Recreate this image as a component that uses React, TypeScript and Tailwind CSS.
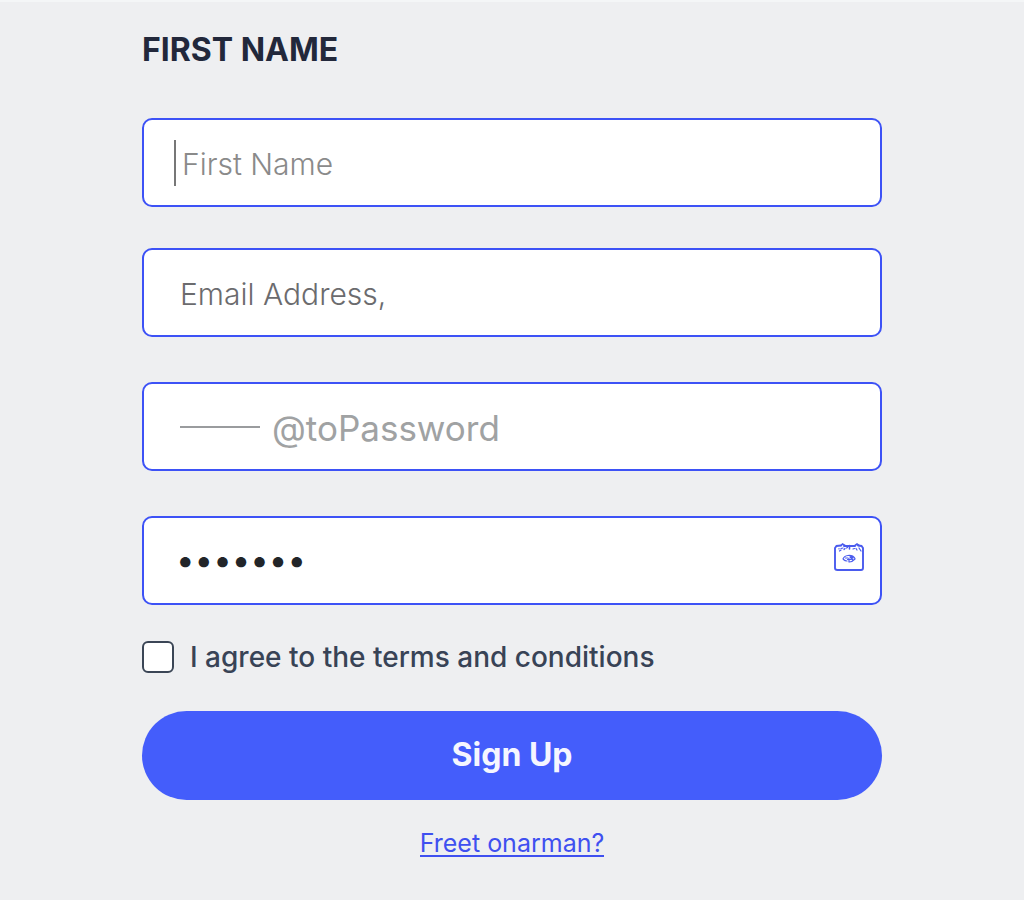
import React, { useState } from "react";

const BOX = "flex h-[89px] items-center rounded-[10px] border-2 border-[#3d52f6] bg-white";
const INPUT = "min-w-0 flex-1 bg-transparent outline-none";

function CalendarIcon() {
  return (
    <svg
      width="32"
      height="30"
      viewBox="0 0 32 30"
      fill="none"
      stroke="#4a5bee"
      strokeLinecap="round"
      aria-hidden="true"
    >
      <path
        d="M8 3.500L3.500 4L2 6V26Q2 28 4.500 28H28Q30 28 30 26V6L28.500 4L25 3.500M11 4H22"
        strokeWidth="1.900"
      />
      <path d="M8 3.500L9.500 2L12 3.500M22 3.500L24 2L26 3.500M16.500 3.500V7" strokeWidth="1.600" />
      <path
        d="M6.500 9L8 8M8 6.500L10 6M11 7.500L12 6.500M13.500 6L14.500 5.500M20 7L21.500 6.500M23 6.500L24 8M26 6L28 9M6 6.500V7"
        strokeWidth="1.200"
      />
      <path
        d="M10 17Q11 14 15 13.500Q20 13 22 16.500M22 17Q19 20 16.500 20M10.500 17.500Q12 19 14 19M12.500 16H15M17 15L19.500 17.500M14.500 17.500H18M16 16.500V20M18 14.500L20 16"
        strokeWidth="1.200"
      />
    </svg>
  );
}

export default function App() {
  const [password, setPassword] = useState("1234567");
  const [agreed, setAgreed] = useState(false);

  return (
    <main className="min-h-screen border-t-2 border-[#f4f6f7] bg-[#eeeff1] px-6 pb-9 pt-7 font-['Inter',sans-serif]">
      <form className="mx-auto max-w-[740px]" onSubmit={(e) => e.preventDefault()}>
        <label htmlFor="first-name" className="block text-[32px] font-bold leading-10 text-[#22283b]">
          FIRST NAME
        </label>

        <div className="mt-12 flex flex-col gap-[45px]">
          <div className="flex flex-col gap-[41px]">
            <div className={`${BOX} gap-1.5 pl-[30px] pr-4`}>
              <span className="h-[46px] w-0.5 bg-[#777777]" aria-hidden="true" />
              <input
                id="first-name"
                type="text"
                placeholder="First Name"
                className={`${INPUT} pt-1 text-[30px] font-light text-[#333333] placeholder:text-[#8a8a8a]`}
              />
            </div>
            <div className={`${BOX} pl-9 pr-4`}>
              <input
                type="text"
                aria-label="Email Address"
                placeholder="Email Address,"
                className={`${INPUT} pt-1 text-[30px] font-light text-[#333333] placeholder:text-[#6b6b6e]`}
              />
            </div>
          </div>
          <div className={`${BOX} gap-3 pl-9 pr-4`}>
            <span className="h-0.5 w-20 bg-[#9a9c9e]" aria-hidden="true" />
            <input
              type="text"
              aria-label="Password"
              placeholder="@toPassword"
              className={`${INPUT} pt-1 text-[35px] text-[#333333] placeholder:text-[#a0a2a3]`}
            />
          </div>
          <div className={`${BOX} pl-8 pr-[15px]`}>
            <input
              type="password"
              aria-label="Confirm password"
              value={password}
              onChange={(e) => setPassword(e.target.value)}
              className={`${INPUT} text-[33px] text-[#222529]`}
            />
            <button type="button" aria-label="Show password" className="-mt-2">
              <CalendarIcon />
            </button>
          </div>
        </div>

        <label className="mt-9 flex items-center gap-4">
          <input
            type="checkbox"
            checked={agreed}
            onChange={(e) => setAgreed(e.target.checked)}
            className="size-8 shrink-0 appearance-none rounded-md border-2 border-[#3b4656] bg-white checked:bg-[#445dfb]"
          />
          <span className="text-[28px] font-medium leading-8 text-[#384356]">
            I agree to the terms and conditions
          </span>
        </label>

        <button
          type="submit"
          className="mt-[38px] h-[89px] w-full rounded-full bg-[#445dfb] pb-0.5 text-[32px] font-bold text-[#f5f6ff]"
        >
          Sign Up
        </button>

        <div className="mt-[31px] text-center">
          <a
            href="#"
            className="inline-block border-b-2 border-[#3f50f0] text-[25px] leading-6 text-[#3f50f0]"
          >
            Freet onarman?
          </a>
        </div>
      </form>
    </main>
  );
}
